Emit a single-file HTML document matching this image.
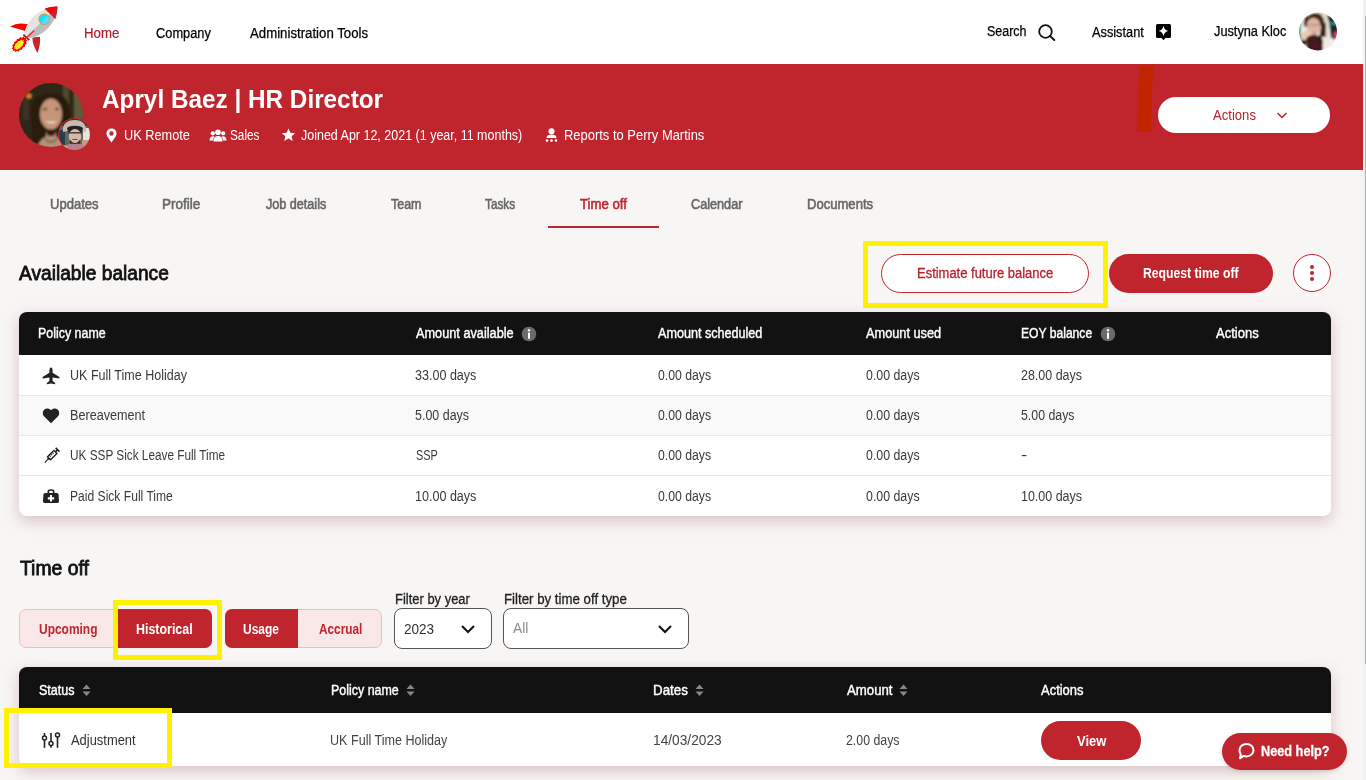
<!DOCTYPE html>
<html><head><meta charset="utf-8">
<style>
*{box-sizing:border-box;margin:0;padding:0}
html,body{width:1366px;height:780px;overflow:hidden}
body{font-family:"Liberation Sans",sans-serif;background:#f8f6f5;position:relative}
.a{position:absolute}
.t{position:absolute;white-space:nowrap;transform-origin:0 0}
#top{position:absolute;left:0;top:0;width:1363px;height:64px;background:#fff}
#band{position:absolute;left:0;top:64px;width:1363px;height:106px;background:#c0252d}
#sbt{position:absolute;left:1363px;top:0;width:3px;height:780px;background:#f1f1f1}
#sbth{position:absolute;left:1365px;top:16px;width:1px;height:648px;background:#b0b0b0}
.tbl{position:absolute;left:19px;width:1312px;background:#fff;border-radius:8px;box-shadow:0 5px 16px rgba(130,60,60,.28);overflow:hidden}
.th{position:absolute;left:0;top:0;width:100%;background:#121212}
.row{position:absolute;left:0;width:100%;border-top:1px solid #e8e8e8}
.yel{position:absolute;border:5px solid #fff200}
</style></head><body>
<div id="top"></div>
<div id="band"></div>
<div id="sbt"></div><div id="sbth"></div>

<!-- rocket logo -->
<svg class="a" style="left:0;top:0" width="64" height="60" viewBox="0 0 64 60">
  <path d="M10.5 26.5 C15 23.5 21 22.8 28 24.2 L25 31 C20 29 15 28.5 10.5 26.8 Z" fill="#f00"/>
  <path d="M32.3 37.5 C32.5 43 34.5 48 37.4 53 C39.5 48 40.5 42 40 36.8 Z" fill="#c6232e"/>
  <path d="M57.5 6.5 C49 6.5 40 10 33 17 C28 22 25.5 28 24.5 33 L30.5 38.2 C36 37 42 34 47 29 C54 22 57.5 14 57.5 6.5 Z" fill="#e4e4e4"/>
  <path d="M57.5 6.5 C57.5 14 54 22 47 29 C42 34 36 37 30.5 38.2 L27.5 35.5 Z" fill="#bdbdbd"/>
  <path d="M57.5 6.5 C53 6.5 49 7.3 44.8 8.8 L55.3 19.3 C56.7 15.3 57.5 11 57.5 6.5 Z" fill="#c6232e"/>
  <path d="M57.5 6.5 C53 6.5 49 7.3 44.8 8.8 L50.6 14 Z" fill="#f00"/>
  <circle cx="44.2" cy="19.2" r="5.2" fill="#00eaff" stroke="#e8901a" stroke-width="1.1"/>
  <path d="M47.9 15.5 A5.2 5.2 0 0 1 40.5 22.9 Z" fill="#66d0ff"/>
  <path d="M24 34 L30 39.5 L28.7 40.8 L22.7 35.3 Z" fill="#a81c22"/>
  <path d="M25.7 37.5 L33.8 30 L34.6 30.9 L27 38.6 Z" fill="#f22"/>
  <path d="M12.7 51.1 L13.2 49.1 L11.7 48.7 L13.0 46.6 L12.1 45.4 L14.0 43.7 L14.1 41.9 L16.2 41.0 L17.1 38.9 L18.9 38.8 L20.6 36.9 L21.8 37.8 L23.9 36.5 L24.3 38.0 L26.3 37.5 L25.8 39.5 L27.3 39.9 L26.0 42.0 L26.9 43.2 L25.0 44.9 L24.9 46.7 L22.8 47.6 L21.9 49.7 L20.1 49.8 L18.4 51.7 L17.2 50.8 L15.1 52.1 L14.7 50.6 Z" fill="#f00"/>
  <path d="M14.3 49.5 L14.7 47.8 L13.8 47.1 L15.1 45.4 L15.2 43.9 L17.0 42.8 L18.1 41.0 L19.6 40.9 L21.3 39.6 L22.0 40.5 L23.7 40.1 L23.3 41.8 L24.2 42.5 L22.9 44.2 L22.8 45.7 L21.0 46.8 L19.9 48.6 L18.4 48.7 L16.7 50.0 L16.0 49.1 Z" fill="#ffe81a"/>
</svg>

<!-- search icon -->
<svg class="a" style="left:1037px;top:23px" width="19" height="19" viewBox="0 0 19 19"><circle cx="8.5" cy="8.5" r="6.3" fill="none" stroke="#111" stroke-width="1.8"/><path d="M13 13 L17.3 17" stroke="#111" stroke-width="1.9" stroke-linecap="round"/></svg>
<!-- assistant icon -->
<svg class="a" style="left:1155px;top:23px" width="17" height="18" viewBox="0 0 17 18"><path d="M2.5 1 H14.5 A1.5 1.5 0 0 1 16 2.5 V13.5 A1.5 1.5 0 0 1 14.5 15 H10.5 L8.5 17.3 L6.5 15 H2.5 A1.5 1.5 0 0 1 1 13.5 V2.5 A1.5 1.5 0 0 1 2.5 1 Z" fill="#000"/><path d="M8.5 2.8 Q9.2 7.2 13.3 8 Q9.2 8.8 8.5 13.2 Q7.8 8.8 3.7 8 Q7.8 7.2 8.5 2.8 Z" fill="#fff"/></svg>
<!-- user avatar top -->
<svg class="a" style="left:1299px;top:12px" width="38" height="39" viewBox="0 0 38 39">
 <defs><clipPath id="cp1"><circle cx="19" cy="19.5" r="19"/></clipPath><filter id="bl1"><feGaussianBlur stdDeviation="0.8"/></filter></defs>
 <g clip-path="url(#cp1)"><g filter="url(#bl1)">
  <rect x="-2" y="-2" width="42" height="43" fill="#ecebe4"/>
  <rect x="19" y="0" width="10" height="30" fill="#dcdccc"/>
  <path d="M28 3 L40 3 L40 28 L32 26 L30 10 Z" fill="#1f2a2c"/>
  <rect x="32" y="10" width="5" height="3" fill="#2a8a8a"/>
  <rect x="35" y="20" width="4" height="8" fill="#d04070"/>
  <rect x="-2" y="10" width="4" height="18" fill="#3aa0a0"/>
  <path d="M6 12 C6 4 12 0.5 17 1 C23 1.5 25 6 25.5 12 C26 18 27 26 26 32 L20 30 L22 14 Z" fill="#4a2016"/>
  <path d="M5 14 C4 8 6 4 8 3 L9 16 Z" fill="#5a2818"/>
  <ellipse cx="14.5" cy="14.5" rx="7" ry="8.8" fill="#dfb5a2"/>
  <path d="M8 13 H21" stroke="#7a8088" stroke-width=".9"/>
  <path d="M12 21 H17" stroke="#c87a8a" stroke-width="1.2"/>
  <path d="M2 23 C5 17 11 18 14 22 L13 29 L2 31 Z" fill="#ecc8b4"/>
  <rect x="-2" y="28" width="9" height="5" fill="#252525"/>
  <path d="M7 27 C10 22 16 22 20 24 C23 20 24 14 23 8 L27 12 C27 20 26 28 25 41 L8 41 Z" fill="#3a1a16"/>
  <path d="M11 30 C14 28 20 28 23 31 L24 41 L11 41 Z" fill="#4a1820"/>
  <path d="M23 25 C28 24 33 29 35 36 L32 41 L24 41 Z" fill="#efece6"/>
  <path d="M20 26 L24 28 L22 41 L19 41 Z" fill="#3a1416"/>
 </g></g>
</svg>
<!-- band avatars -->
<svg class="a" style="left:19px;top:83px" width="64" height="64" viewBox="0 0 64 64">
 <defs><clipPath id="cp2"><circle cx="32" cy="32" r="32"/></clipPath><filter id="bl2"><feGaussianBlur stdDeviation="1.2"/></filter></defs>
 <g clip-path="url(#cp2)"><g filter="url(#bl2)">
  <rect x="-3" y="-3" width="70" height="70" fill="#2e2818"/>
  <rect x="44" y="-3" width="6" height="50" fill="#50482e"/>
  <rect x="55" y="-3" width="10" height="40" fill="#5e5a3a"/>
  <rect x="4" y="-3" width="6" height="40" fill="#3a3222"/>
  <circle cx="10" cy="13" r="2.5" fill="#d8882a"/>
  <path d="M12 36 C10 16 20 10 32 10 C46 10 52 18 50 36 L48 64 L14 64 Z" fill="#2a1a10"/>
  <ellipse cx="32" cy="31" rx="11" ry="15.5" fill="#c69478"/>
  <ellipse cx="26" cy="26" rx="2" ry="1.2" fill="#5a3a2a"/>
  <ellipse cx="38" cy="26" rx="2" ry="1.2" fill="#5a3a2a"/>
  <path d="M25.5 37.5 Q32 43 38.5 37.5 Q32 40 25.5 37.5 Z" fill="#f4eee8"/>
  <path d="M27 48 C29 56 35 56 37 48 L37 54 L27 54 Z" fill="#b88a6c"/>
  <path d="M18 66 C20 56 26 53 32 53 C40 53 45 57 48 66 Z" fill="#b09078"/>
  <path d="M26 56 Q32 62 38 56" stroke="#3a2a1a" stroke-width="1" fill="none"/>
  <path d="M40 56 L52 64 L46 66 Z" fill="#e8e0d0"/>
 </g></g>
</svg>
<svg class="a" style="left:58px;top:118px" width="33" height="33" viewBox="0 0 33 33">
 <defs><clipPath id="cp3"><circle cx="16.5" cy="16.5" r="15.4"/></clipPath><filter id="bl3"><feGaussianBlur stdDeviation="0.75"/></filter></defs>
 <circle cx="16.5" cy="16.5" r="16.5" fill="#c0252d"/>
 <g clip-path="url(#cp3)"><g filter="url(#bl3)">
  <rect x="-2" y="-2" width="37" height="37" fill="#5a6a58"/>
  <rect x="-2" y="-2" width="37" height="10" fill="#303838"/>
  <rect x="-2" y="12" width="9" height="16" fill="#2a3a48"/>
  <rect x="25" y="10" width="10" height="14" fill="#e8e4dc"/>
  <rect x="24" y="22" width="10" height="8" fill="#c89a80"/>
  <path d="M5 14 C4 5 10 2 17 2 C24 2 29 6 28 14 L24 13 L10 13 Z" fill="#c8bab0"/>
  <path d="M9 10 C12 7 22 7 25 10 L24 14 L10 14 Z" fill="#2a2420"/>
  <ellipse cx="17" cy="19" rx="6.3" ry="8" fill="#d8b8a8"/>
  <path d="M10 14.8 H24" stroke="#3a3a40" stroke-width="1.4"/>
  <path d="M11.5 21 Q17 29 22.5 21 L22 26 Q17 29.5 12 26 Z" fill="#3a2a20"/>
  <path d="M14.5 21.5 H19.5" stroke="#8a3a30" stroke-width="1"/>
  <path d="M5 35 C6 27 10 25 17 26 C23 25 28 27 30 35 Z" fill="#b88090"/>
  <path d="M2 26 L9 28 L7 35 L0 34 Z" fill="#e0c860"/>
 </g></g>
</svg>
<!-- meta icons -->
<svg class="a" style="left:106px;top:128px" width="11" height="15" viewBox="0 0 11 15"><path d="M5.5 0.5 C8.5 0.5 10.5 2.8 10.5 5.5 C10.5 8.5 7 12 5.5 14.5 C4 12 0.5 8.5 0.5 5.5 C0.5 2.8 2.5 0.5 5.5 0.5 Z M5.5 3.3 A2.2 2.2 0 1 0 5.5 7.7 A2.2 2.2 0 1 0 5.5 3.3 Z" fill="#fff" fill-rule="evenodd"/></svg>
<svg class="a" style="left:209px;top:129px" width="18" height="13" viewBox="0 0 18 13"><circle cx="9" cy="3.3" r="2.8" fill="#fff"/><circle cx="3.8" cy="4.3" r="2.1" fill="#fff"/><circle cx="14.2" cy="4.3" r="2.1" fill="#fff"/><path d="M4.5 12.5 C4.5 8.5 6.5 7 9 7 C11.5 7 13.5 8.5 13.5 12.5 Z" fill="#fff"/><path d="M0.5 11.5 C0.5 8.5 2 7.3 4 7.3 C4.8 7.3 5.3 7.5 5.6 7.8 C4.5 8.8 4 10 4 11.5 Z" fill="#fff"/><path d="M17.5 11.5 C17.5 8.5 16 7.3 14 7.3 C13.2 7.3 12.7 7.5 12.4 7.8 C13.5 8.8 14 10 14 11.5 Z" fill="#fff"/></svg>
<svg class="a" style="left:281px;top:128px" width="15" height="14" viewBox="0 0 15 14"><path d="M7.5 0.5 L9.4 4.8 L14.2 5.2 L10.6 8.3 L11.7 13 L7.5 10.5 L3.3 13 L4.4 8.3 L0.8 5.2 L5.6 4.8 Z" fill="#fff"/></svg>
<svg class="a" style="left:545px;top:128px" width="13" height="14" viewBox="0 0 13 14"><circle cx="6.5" cy="3.3" r="3" fill="#fff"/><path d="M1.5 10 C1.5 7.5 3.5 6.5 6.5 6.5 C9.5 6.5 11.5 7.5 11.5 10 Z" fill="#fff"/><circle cx="2" cy="12.6" r="1.3" fill="#fff"/><circle cx="6.5" cy="12.6" r="1.3" fill="#fff"/><circle cx="11" cy="12.6" r="1.3" fill="#fff"/></svg>

<div class="a" style="left:1137px;top:66px;width:16px;height:66px;background:#c22400;clip-path:polygon(16% 0,100% 0,86% 100%,0 100%)"></div>
<div class="a" style="left:1158px;top:97px;width:172px;height:36px;border-radius:18px;background:#fff"></div>
<svg class="a" style="left:1276px;top:111px" width="12" height="9" viewBox="0 0 12 9"><path d="M1.5 2 L6 6.5 L10.5 2" fill="none" stroke="#b8202d" stroke-width="1.5"/></svg>

<div class="a" style="left:548px;top:226px;width:111px;height:2px;background:#c0252d"></div>

<div class="a" style="left:881px;top:254px;width:208px;height:39px;border-radius:20px;border:1px solid #c0252d;background:#fff"></div>
<div class="a" style="left:1109px;top:254px;width:164px;height:39px;border-radius:20px;background:#c0252d"></div>
<div class="a" style="left:1293px;top:254px;width:38px;height:38px;border-radius:50%;border:1px solid #c0252d;background:#fff"></div>
<div class="a" style="left:1310px;top:265px;width:4px;height:4px;border-radius:50%;background:#c0252d"></div>
<div class="a" style="left:1310px;top:271px;width:4px;height:4px;border-radius:50%;background:#c0252d"></div>
<div class="a" style="left:1310px;top:277px;width:4px;height:4px;border-radius:50%;background:#c0252d"></div>
<div class="yel" style="left:863px;top:241px;width:245px;height:67px"></div>

<!-- table 1 -->
<div class="tbl" style="top:312px;height:204px">
  <div class="th" style="height:43px"></div>
  <div class="row" style="top:83px;height:40px;background:#f9f9f9"></div>
  <div class="row" style="top:123px;height:40px"></div>
  <div class="row" style="top:163px;height:41px"></div>
</div>
<svg class="a" style="left:521px;top:326px" width="16" height="16" viewBox="0 0 16 16"><circle cx="8" cy="8" r="7.3" fill="#6b6b6b"/><circle cx="8" cy="4.3" r="1.2" fill="#fff"/><rect x="7" y="6.5" width="2" height="6.3" rx=".6" fill="#fff"/></svg>
<svg class="a" style="left:1100px;top:326px" width="16" height="16" viewBox="0 0 16 16"><circle cx="8" cy="8" r="7.3" fill="#6b6b6b"/><circle cx="8" cy="4.3" r="1.2" fill="#fff"/><rect x="7" y="6.5" width="2" height="6.3" rx=".6" fill="#fff"/></svg>
<!-- row icons -->
<svg class="a" style="left:41px;top:366px" width="20" height="20" viewBox="0 0 20 20"><path d="M10 1.6 C11.1 1.6 11.6 3.2 11.6 5 V6.8 L18.4 11 V12.6 L11.6 11.6 V15 L14.2 17 V18.2 L10 17.4 L5.8 18.2 V17 L8.4 15 V11.6 L1.6 12.6 V11 L8.4 6.8 V5 C8.4 3.2 8.9 1.6 10 1.6 Z" fill="#222"/></svg>
<svg class="a" style="left:42px;top:407px" width="18" height="17" viewBox="0 0 18 17"><path d="M9 16.2 L2.2 9.6 C0.2 7.6 0.3 4.3 2.4 2.5 C4.3 0.9 7.2 1.2 9 3.2 C10.8 1.2 13.7 0.9 15.6 2.5 C17.7 4.3 17.8 7.6 15.8 9.6 Z" fill="#222"/></svg>
<svg class="a" style="left:41px;top:446px" width="20" height="20" viewBox="0 0 20 20"><g transform="translate(10.2,10.1) rotate(-45) scale(0.82) translate(-7.25,0)"><rect x="3.5" y="-2.6" width="11" height="5.2" fill="#fff" stroke="#222" stroke-width="1.7"/><path d="M6.5 -2.6 V0 M9 -2.6 V0 M11.5 -2.6 V0" stroke="#222" stroke-width="1.2"/><rect x="1.8" y="-1.6" width="2" height="3.2" fill="#222"/><path d="M-4 0 H2" stroke="#222" stroke-width="1.3"/><path d="M14.5 0 H18" stroke="#222" stroke-width="1.8"/><path d="M18.2 -3.2 V3.2" stroke="#222" stroke-width="2"/></g></svg>
<svg class="a" style="left:42px;top:487px" width="18" height="17" viewBox="0 0 18 17"><path d="M6.3 6.5 V5 A2 2 0 0 1 8.3 3 H9.7 A2 2 0 0 1 11.7 5 V6.5" fill="none" stroke="#222" stroke-width="1.7"/><path d="M3.2 6 H14.8 A1.8 1.8 0 0 1 16.6 7.6 L17 14.2 A1.6 1.6 0 0 1 15.4 16 H2.6 A1.6 1.6 0 0 1 1 14.2 L1.4 7.6 A1.8 1.8 0 0 1 3.2 6 Z M8 8 V10.2 H5.8 V12.4 H8 V14.6 H10 V12.4 H12.2 V10.2 H10 V8 Z" fill="#222" fill-rule="evenodd"/></svg>

<!-- segmented -->
<div class="a" style="left:19px;top:609px;width:193px;height:39px;border-radius:7px;border:1px solid #efbdc0;background:#fae8e9"></div>
<div class="a" style="left:118px;top:609px;width:94px;height:39px;border-radius:0 7px 7px 0;background:#c0252d"></div>
<div class="yel" style="left:113px;top:600px;width:109px;height:60px"></div>
<div class="a" style="left:225px;top:609px;width:157px;height:39px;border-radius:7px;border:1px solid #efbdc0;background:#fae8e9"></div>
<div class="a" style="left:225px;top:609px;width:73px;height:39px;border-radius:7px 0 0 7px;background:#c0252d"></div>
<!-- selects -->
<div class="a" style="left:394px;top:608px;width:98px;height:41px;border-radius:8px;border:1px solid #555;background:#fff"></div>
<svg class="a" style="left:460px;top:623px" width="16" height="12" viewBox="0 0 16 12"><path d="M2 3 L8 9 L14 3" fill="none" stroke="#111" stroke-width="2"/></svg>
<div class="a" style="left:503px;top:608px;width:186px;height:41px;border-radius:8px;border:1px solid #555;background:#fff"></div>
<svg class="a" style="left:657px;top:623px" width="16" height="12" viewBox="0 0 16 12"><path d="M2 3 L8 9 L14 3" fill="none" stroke="#111" stroke-width="2"/></svg>

<!-- table 2 -->
<div class="tbl" style="top:667px;height:99px">
  <div class="th" style="height:46px"></div>
</div>
<svg class="a" style="left:82px;top:684px" width="9" height="13" viewBox="0 0 9 13"><path d="M4.5 0.5 L8.5 5 H0.5 Z M0.5 7.5 H8.5 L4.5 12 Z" fill="#888"/></svg>
<svg class="a" style="left:406px;top:684px" width="9" height="13" viewBox="0 0 9 13"><path d="M4.5 0.5 L8.5 5 H0.5 Z M0.5 7.5 H8.5 L4.5 12 Z" fill="#888"/></svg>
<svg class="a" style="left:694.5px;top:684px" width="9" height="13" viewBox="0 0 9 13"><path d="M4.5 0.5 L8.5 5 H0.5 Z M0.5 7.5 H8.5 L4.5 12 Z" fill="#888"/></svg>
<svg class="a" style="left:898.5px;top:684px" width="9" height="13" viewBox="0 0 9 13"><path d="M4.5 0.5 L8.5 5 H0.5 Z M0.5 7.5 H8.5 L4.5 12 Z" fill="#888"/></svg>
<svg class="a" style="left:41px;top:732px" width="20" height="18" viewBox="0 0 20 18"><g stroke="#222" stroke-width="1.6" fill="none"><path d="M3.5 1 V15.8"/><path d="M10 1 V15.8"/><path d="M16.5 1 V15.8"/></g><g fill="#fff" stroke="#222" stroke-width="1.5"><circle cx="3.5" cy="6" r="2"/><circle cx="10" cy="11.6" r="2"/><circle cx="16.5" cy="3" r="2"/></g></svg>
<div class="a" style="left:1041px;top:721px;width:100px;height:39px;border-radius:20px;background:#c0252d"></div>
<div class="yel" style="left:4px;top:708px;width:168px;height:60px"></div>

<div class="a" style="left:1222px;top:733px;width:125px;height:37px;border-radius:19px;background:#c0252d;box-shadow:0 1px 4px rgba(0,0,0,.15)"></div>
<svg class="a" style="left:1238px;top:742px" width="17" height="18" viewBox="0 0 17 18"><path d="M8.5 2 C12.5 2 15.5 4.8 15.5 8.2 C15.5 11.6 12.5 14.4 8.5 14.4 C7.5 14.4 6.5 14.2 5.6 13.9 L2 16.3 L2.8 12.5 C1.9 11.3 1.5 9.8 1.5 8.2 C1.5 4.8 4.5 2 8.5 2 Z" fill="none" stroke="#fff" stroke-width="2" stroke-linejoin="round"/></svg>

<div class="t" style="left:83.6px;top:26.1px;font-size:14px;line-height:14px;font-weight:400;color:#b01c2a;transform:scaleX(0.944);-webkit-text-stroke:0.2px #b01c2a">Home</div>
<div class="t" style="left:156.1px;top:26.1px;font-size:14px;line-height:14px;font-weight:400;color:#000;transform:scaleX(0.915);-webkit-text-stroke:0.25px #000">Company</div>
<div class="t" style="left:250.0px;top:26.1px;font-size:14px;line-height:14px;font-weight:400;color:#000;transform:scaleX(0.944);-webkit-text-stroke:0.25px #000">Administration Tools</div>
<div class="t" style="left:987.4px;top:24.0px;font-size:14px;line-height:14px;font-weight:400;color:#000;transform:scaleX(0.891);-webkit-text-stroke:0.25px #000">Search</div>
<div class="t" style="left:1091.6px;top:24.9px;font-size:14px;line-height:14px;font-weight:400;color:#000;transform:scaleX(0.912);-webkit-text-stroke:0.25px #000">Assistant</div>
<div class="t" style="left:1214.3px;top:23.7px;font-size:14px;line-height:14px;font-weight:400;color:#000;transform:scaleX(0.911);-webkit-text-stroke:0.25px #000">Justyna Kloc</div>
<div class="t" style="left:101.6px;top:86.4px;font-size:26px;line-height:26px;font-weight:700;color:#fff;transform:scaleX(0.935);">Apryl Baez | HR Director</div>
<div class="t" style="left:123.5px;top:128.1px;font-size:14px;line-height:14px;font-weight:400;color:#fff;transform:scaleX(0.911);">UK Remote</div>
<div class="t" style="left:230.2px;top:128.1px;font-size:14px;line-height:14px;font-weight:400;color:#fff;transform:scaleX(0.841);">Sales</div>
<div class="t" style="left:301.3px;top:128.1px;font-size:14px;line-height:14px;font-weight:400;color:#fff;transform:scaleX(0.892);">Joined Apr 12, 2021 (1 year, 11 months)</div>
<div class="t" style="left:563.5px;top:128.1px;font-size:14px;line-height:14px;font-weight:400;color:#fff;transform:scaleX(0.925);">Reports to Perry Martins</div>
<div class="t" style="left:1213.0px;top:107.6px;font-size:14px;line-height:14px;font-weight:400;color:#b8202d;transform:scaleX(0.935);">Actions</div>
<div class="t" style="left:50.3px;top:197.1px;font-size:14px;line-height:14px;font-weight:400;color:#666;transform:scaleX(0.933);-webkit-text-stroke:0.55px #666">Updates</div>
<div class="t" style="left:162.3px;top:197.1px;font-size:14px;line-height:14px;font-weight:400;color:#666;transform:scaleX(0.967);-webkit-text-stroke:0.55px #666">Profile</div>
<div class="t" style="left:265.7px;top:197.1px;font-size:14px;line-height:14px;font-weight:400;color:#666;transform:scaleX(0.900);-webkit-text-stroke:0.55px #666">Job details</div>
<div class="t" style="left:390.6px;top:197.1px;font-size:14px;line-height:14px;font-weight:400;color:#666;transform:scaleX(0.891);-webkit-text-stroke:0.55px #666">Team</div>
<div class="t" style="left:485.4px;top:197.1px;font-size:14px;line-height:14px;font-weight:400;color:#666;transform:scaleX(0.842);-webkit-text-stroke:0.55px #666">Tasks</div>
<div class="t" style="left:580.2px;top:197.1px;font-size:14px;line-height:14px;font-weight:400;color:#c0252d;transform:scaleX(0.942);-webkit-text-stroke:0.55px #c0252d">Time off</div>
<div class="t" style="left:691.4px;top:197.1px;font-size:14px;line-height:14px;font-weight:400;color:#666;transform:scaleX(0.905);-webkit-text-stroke:0.55px #666">Calendar</div>
<div class="t" style="left:806.7px;top:197.1px;font-size:14px;line-height:14px;font-weight:400;color:#666;transform:scaleX(0.933);-webkit-text-stroke:0.55px #666">Documents</div>
<div class="t" style="left:19.3px;top:263.4px;font-size:20px;line-height:20px;font-weight:400;color:#111;transform:scaleX(0.958);-webkit-text-stroke:0.8px #111">Available balance</div>
<div class="t" style="left:916.9px;top:265.9px;font-size:14px;line-height:14px;font-weight:400;color:#b8202d;transform:scaleX(0.926);-webkit-text-stroke:0.3px #b8202d">Estimate future balance</div>
<div class="t" style="left:1143.0px;top:266.0px;font-size:14px;line-height:14px;font-weight:700;color:#fff;transform:scaleX(0.871);">Request time off</div>
<div class="t" style="left:37.6px;top:325.9px;font-size:14px;line-height:14px;font-weight:400;color:#fff;transform:scaleX(0.887);-webkit-text-stroke:0.4px #fff">Policy name</div>
<div class="t" style="left:416.3px;top:325.9px;font-size:14px;line-height:14px;font-weight:400;color:#fff;transform:scaleX(0.909);-webkit-text-stroke:0.4px #fff">Amount available</div>
<div class="t" style="left:657.6px;top:325.9px;font-size:14px;line-height:14px;font-weight:400;color:#fff;transform:scaleX(0.900);-webkit-text-stroke:0.4px #fff">Amount scheduled</div>
<div class="t" style="left:866.2px;top:325.9px;font-size:14px;line-height:14px;font-weight:400;color:#fff;transform:scaleX(0.911);-webkit-text-stroke:0.4px #fff">Amount used</div>
<div class="t" style="left:1021.2px;top:325.9px;font-size:14px;line-height:14px;font-weight:400;color:#fff;transform:scaleX(0.865);-webkit-text-stroke:0.4px #fff">EOY balance</div>
<div class="t" style="left:1215.8px;top:325.9px;font-size:14px;line-height:14px;font-weight:400;color:#fff;transform:scaleX(0.930);-webkit-text-stroke:0.4px #fff">Actions</div>
<div class="t" style="left:69.9px;top:367.6px;font-size:14px;line-height:14px;font-weight:400;color:#3a3a3a;transform:scaleX(0.895);">UK Full Time Holiday</div>
<div class="t" style="left:415.4px;top:367.6px;font-size:14px;line-height:14px;font-weight:400;color:#3a3a3a;transform:scaleX(0.896);">33.00 days</div>
<div class="t" style="left:657.6px;top:367.6px;font-size:14px;line-height:14px;font-weight:400;color:#3a3a3a;transform:scaleX(0.875);">0.00 days</div>
<div class="t" style="left:866.2px;top:367.6px;font-size:14px;line-height:14px;font-weight:400;color:#3a3a3a;transform:scaleX(0.883);">0.00 days</div>
<div class="t" style="left:1021.2px;top:367.6px;font-size:14px;line-height:14px;font-weight:400;color:#3a3a3a;transform:scaleX(0.891);">28.00 days</div>
<div class="t" style="left:69.9px;top:407.8px;font-size:14px;line-height:14px;font-weight:400;color:#3a3a3a;transform:scaleX(0.902);">Bereavement</div>
<div class="t" style="left:415.4px;top:407.8px;font-size:14px;line-height:14px;font-weight:400;color:#3a3a3a;transform:scaleX(0.890);">5.00 days</div>
<div class="t" style="left:657.6px;top:407.8px;font-size:14px;line-height:14px;font-weight:400;color:#3a3a3a;transform:scaleX(0.875);">0.00 days</div>
<div class="t" style="left:866.2px;top:407.8px;font-size:14px;line-height:14px;font-weight:400;color:#3a3a3a;transform:scaleX(0.883);">0.00 days</div>
<div class="t" style="left:1021.2px;top:407.8px;font-size:14px;line-height:14px;font-weight:400;color:#3a3a3a;transform:scaleX(0.881);">5.00 days</div>
<div class="t" style="left:70.0px;top:447.9px;font-size:14px;line-height:14px;font-weight:400;color:#3a3a3a;transform:scaleX(0.842);">UK SSP Sick Leave Full Time</div>
<div class="t" style="left:415.5px;top:447.9px;font-size:14px;line-height:14px;font-weight:400;color:#3a3a3a;transform:scaleX(0.778);">SSP</div>
<div class="t" style="left:657.6px;top:447.9px;font-size:14px;line-height:14px;font-weight:400;color:#3a3a3a;transform:scaleX(0.875);">0.00 days</div>
<div class="t" style="left:866.2px;top:447.9px;font-size:14px;line-height:14px;font-weight:400;color:#3a3a3a;transform:scaleX(0.883);">0.00 days</div>
<div class="t" style="left:1020.8px;top:447.9px;font-size:14px;line-height:14px;font-weight:400;color:#3a3a3a;transform:scaleX(1.333);">-</div>
<div class="t" style="left:69.9px;top:488.5px;font-size:14px;line-height:14px;font-weight:400;color:#3a3a3a;transform:scaleX(0.864);">Paid Sick Full Time</div>
<div class="t" style="left:415.4px;top:488.5px;font-size:14px;line-height:14px;font-weight:400;color:#3a3a3a;transform:scaleX(0.896);">10.00 days</div>
<div class="t" style="left:657.6px;top:488.5px;font-size:14px;line-height:14px;font-weight:400;color:#3a3a3a;transform:scaleX(0.875);">0.00 days</div>
<div class="t" style="left:866.2px;top:488.5px;font-size:14px;line-height:14px;font-weight:400;color:#3a3a3a;transform:scaleX(0.883);">0.00 days</div>
<div class="t" style="left:1021.2px;top:488.5px;font-size:14px;line-height:14px;font-weight:400;color:#3a3a3a;transform:scaleX(0.891);">10.00 days</div>
<div class="t" style="left:19.5px;top:557.7px;font-size:20px;line-height:20px;font-weight:400;color:#111;transform:scaleX(0.968);-webkit-text-stroke:0.8px #111">Time off</div>
<div class="t" style="left:38.9px;top:621.9px;font-size:14px;line-height:14px;font-weight:700;color:#c0252d;transform:scaleX(0.854);">Upcoming</div>
<div class="t" style="left:136.1px;top:621.9px;font-size:14px;line-height:14px;font-weight:700;color:#fff;transform:scaleX(0.887);">Historical</div>
<div class="t" style="left:243.1px;top:621.9px;font-size:14px;line-height:14px;font-weight:700;color:#fff;transform:scaleX(0.854);">Usage</div>
<div class="t" style="left:318.8px;top:621.9px;font-size:14px;line-height:14px;font-weight:700;color:#c0252d;transform:scaleX(0.843);">Accrual</div>
<div class="t" style="left:395.0px;top:592.1px;font-size:14px;line-height:14px;font-weight:400;color:#222;transform:scaleX(0.925);-webkit-text-stroke:0.3px #222">Filter by year</div>
<div class="t" style="left:503.7px;top:592.1px;font-size:14px;line-height:14px;font-weight:400;color:#222;transform:scaleX(0.947);-webkit-text-stroke:0.3px #222">Filter by time off type</div>
<div class="t" style="left:404.0px;top:621.6px;font-size:14px;line-height:14px;font-weight:400;color:#333;transform:scaleX(0.967);">2023</div>
<div class="t" style="left:513.4px;top:621.1px;font-size:14px;line-height:14px;font-weight:400;color:#8a8a8a;transform:scaleX(0.980);">All</div>
<div class="t" style="left:39.2px;top:682.7px;font-size:14px;line-height:14px;font-weight:400;color:#fff;transform:scaleX(0.895);-webkit-text-stroke:0.4px #fff">Status</div>
<div class="t" style="left:331.4px;top:682.7px;font-size:14px;line-height:14px;font-weight:400;color:#fff;transform:scaleX(0.889);-webkit-text-stroke:0.4px #fff">Policy name</div>
<div class="t" style="left:653.0px;top:682.7px;font-size:14px;line-height:14px;font-weight:400;color:#fff;transform:scaleX(0.954);-webkit-text-stroke:0.4px #fff">Dates</div>
<div class="t" style="left:846.5px;top:682.7px;font-size:14px;line-height:14px;font-weight:400;color:#fff;transform:scaleX(0.944);-webkit-text-stroke:0.4px #fff">Amount</div>
<div class="t" style="left:1041.3px;top:682.7px;font-size:14px;line-height:14px;font-weight:400;color:#fff;transform:scaleX(0.926);-webkit-text-stroke:0.4px #fff">Actions</div>
<div class="t" style="left:70.8px;top:732.7px;font-size:14px;line-height:14px;font-weight:400;color:#333;transform:scaleX(0.923);">Adjustment</div>
<div class="t" style="left:330.1px;top:732.9px;font-size:14px;line-height:14px;font-weight:400;color:#444;transform:scaleX(0.898);">UK Full Time Holiday</div>
<div class="t" style="left:653.0px;top:733.0px;font-size:14px;line-height:14px;font-weight:400;color:#444;transform:scaleX(0.980);">14/03/2023</div>
<div class="t" style="left:845.6px;top:732.9px;font-size:14px;line-height:14px;font-weight:400;color:#444;transform:scaleX(0.881);">2.00 days</div>
<div class="t" style="left:1076.7px;top:734.3px;font-size:14px;line-height:14px;font-weight:700;color:#fff;transform:scaleX(0.925);">View</div>
<div class="t" style="left:1260.8px;top:744.4px;font-size:14px;line-height:14px;font-weight:700;color:#fff;transform:scaleX(0.908);-webkit-text-stroke:0.3px #fff">Need help?</div>
</body></html>
